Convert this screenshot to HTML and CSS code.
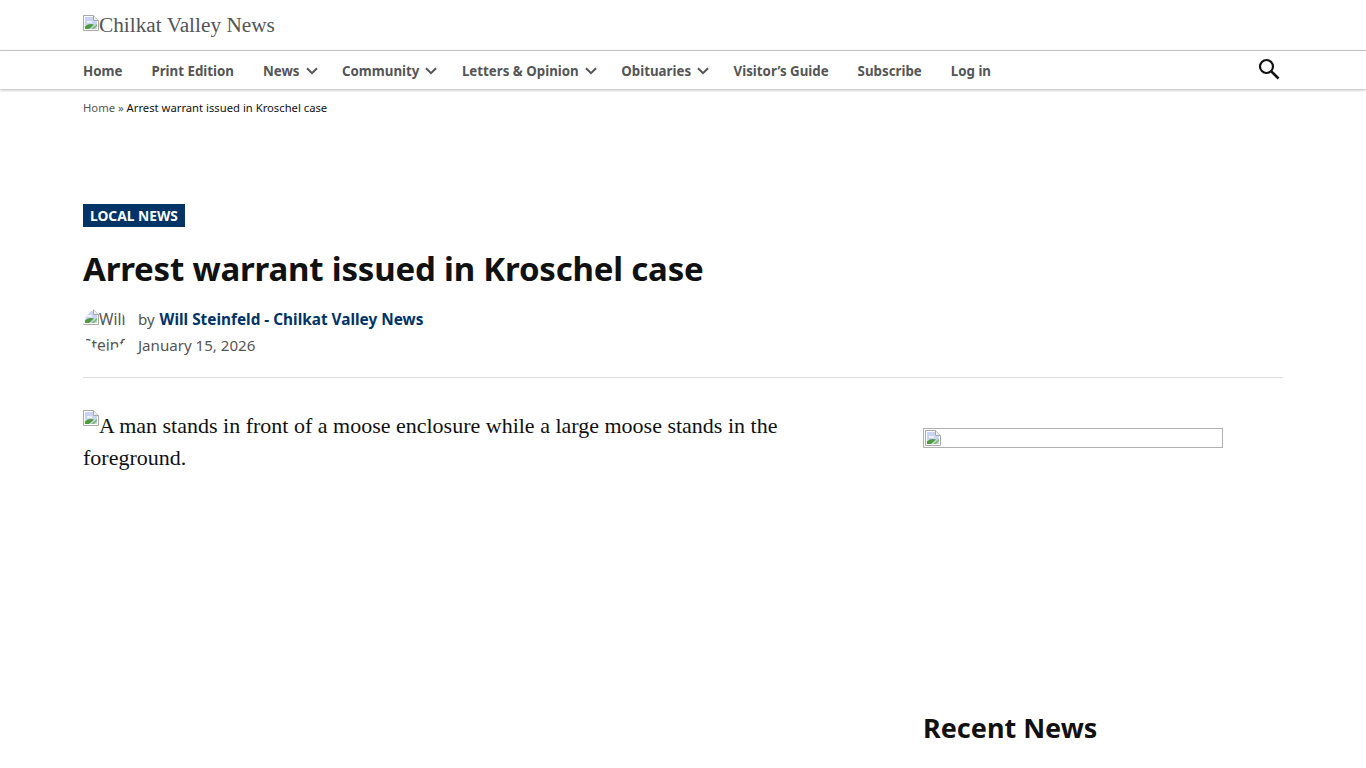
FILE: index.html
```html
<!DOCTYPE html>
<html lang="en">
<head>
<meta charset="utf-8">
<title>Arrest warrant issued in Kroschel case</title>
<link rel="stylesheet" href="styles.css">
</head>
<body>
<svg class="defs" width="0" height="0" aria-hidden="true">
  <symbol id="broken" viewBox="0 0 16 16">
    <path d="M0.5 0.5H10.5L15.5 5.5V15.5H0.5Z" fill="#fff" stroke="#a9a9a9"/>
    <path d="M2 2H10V6H14V14H2Z" fill="#c9d4f4"/>
    <path d="M4 6H9V8H4Z" fill="#eef1fb"/>
    <path d="M2 14V11.5C5 8.5 8 8.5 11 9.5L6 14Z" fill="#4f9a3c"/>
    <path d="M8 14L14 9V11L11 14Z" fill="#7cbb63"/>
    <path d="M10.5 0.5V5.5H15.5" fill="#eee" stroke="#a9a9a9"/>
  </symbol>
</svg>
<header class="brand-bar">
  <div class="wrap brand-alt"><svg class="broken"><use href="#broken"/></svg>Chilkat Valley News</div>
</header>
<nav class="nav-bar">
  <div class="wrap nav-inner">
    <ul class="menu">
      <li><a href="#">Home</a></li>
      <li><a href="#">Print Edition</a></li>
      <li class="has-sub"><a href="#">News</a><svg class="chev" viewBox="0 0 12 8"><path d="M1 1.2L6 6.2L11 1.2" fill="none" stroke="currentColor" stroke-width="2"/></svg></li>
      <li class="has-sub"><a href="#">Community</a><svg class="chev" viewBox="0 0 12 8"><path d="M1 1.2L6 6.2L11 1.2" fill="none" stroke="currentColor" stroke-width="2"/></svg></li>
      <li class="has-sub"><a href="#">Letters &amp; Opinion</a><svg class="chev" viewBox="0 0 12 8"><path d="M1 1.2L6 6.2L11 1.2" fill="none" stroke="currentColor" stroke-width="2"/></svg></li>
      <li class="has-sub"><a href="#">Obituaries</a><svg class="chev" viewBox="0 0 12 8"><path d="M1 1.2L6 6.2L11 1.2" fill="none" stroke="currentColor" stroke-width="2"/></svg></li>
      <li><a href="#">Visitor’s Guide</a></li>
      <li><a href="#">Subscribe</a></li>
      <li><a href="#">Log in</a></li>
    </ul>
    <svg class="search" viewBox="0 0 24 24" aria-label="Search"><circle cx="9.5" cy="9.5" r="6.5" fill="none" stroke="#111" stroke-width="2.2"/><path d="M14.3 14.3L21.5 21.5" stroke="#111" stroke-width="2.6"/></svg>
  </div>
</nav>
<div class="wrap crumbs"><a href="#">Home</a> <span class="sep">»</span> Arrest warrant issued in Kroschel case</div>
<main class="wrap">
  <header class="entry-head">
    <a class="tag" href="#">LOCAL NEWS</a>
    <h1>Arrest warrant issued in Kroschel case</h1>
    <div class="byline">
      <div class="avatar"><svg class="broken"><use href="#broken"/></svg>Will Steinfeld</div>
      <div class="meta">
        <div class="author">by <a href="#">Will Steinfeld - Chilkat Valley News</a></div>
        <div class="date">January 15, 2026</div>
      </div>
    </div>
  </header>
  <div class="columns">
    <article class="story">
      <p class="photo-alt"><svg class="broken"><use href="#broken"/></svg>A man stands in front of a moose enclosure while a large moose stands in the foreground.</p>
    </article>
    <aside class="side">
      <div class="ad"><svg class="broken"><use href="#broken"/></svg></div>
      <h2>Recent News</h2>
    </aside>
  </div>
</main>
</body>
</html>
```
FILE: styles.css
```css
* { box-sizing: border-box; }
html, body { margin: 0; padding: 0; height: 768px; overflow: hidden; background: #fff; }
body { font-family: "Noto Sans", "Open Sans", sans-serif; color: #111; }
a { color: inherit; text-decoration: none; }
.defs { display: block; height: 0; }
.wrap { width: 1200px; margin-left: 83px; }
.broken { width: 16px; height: 16px; display: inline-block; }
.brand-bar { height: 51px; border-bottom: 1px solid #ccc; }
.brand-alt { padding-top: 15px; font: 21.3px/21px "Liberation Serif", serif; color: #555; display: flex; align-items: flex-start; }
.nav-bar { height: 38px; box-shadow: 0 1px 3px rgba(0,0,0,.3); }
.nav-inner { display: flex; justify-content: space-between; align-items: center; height: 38px; padding-top: 2px; }
.menu { display: flex; list-style: none; margin: 0; padding: 0; gap: 29px; font-size: 13.3px; font-weight: 700; color: #555; line-height: 36px; }
.menu li { display: flex; align-items: center; }
.has-sub { gap: 6px; margin-right: -4.5px; }
.chev { width: 12px; height: 8px; color: #555; }
.search { width: 24px; height: 24px; margin-right: 2px; margin-top: -4px; }
.crumbs { font-size: 11.25px; line-height: 17px; margin-top: 10px; color: #111; }
.crumbs a, .sep { color: #555; }
.entry-head { padding-top: 88px; border-bottom: 1px solid #ddd; height: 262px; }
.tag { display: inline-block; background: #003366; color: #fff; font-size: 13.8px; font-weight: 700; line-height: 23px; padding: 0 7px; }
h1 { font-size: 33px; letter-spacing: -.2px; line-height: 44px; font-weight: 700; margin: 20px 0 15px; color: #111; }
.byline { display: flex; gap: 10px; }
.avatar { width: 45px; height: 45px; overflow: hidden; border-radius: 50%; font-size: 15.5px; line-height: 26px; color: #555; }
.meta { font-size: 15.1px; line-height: 26px; color: #555; }
.author a { color: #003366; font-weight: 700; font-size: 15.35px; margin-left: 1px; }
.columns { display: flex; justify-content: space-between; padding-top: 32px; }
.story { width: 720px; }
.photo-alt { margin: 0; font: 22px/32px "Liberation Serif", serif; color: #111; }
.photo-alt .broken { vertical-align: 7px; }
.side { width: 360px; padding-top: 18px; }
.ad { width: 300px; height: 20px; border: 1px solid #b0b0b0; overflow: hidden; padding: 1px; }
.ad .broken { display: block; }
h2 { font-size: 27px; line-height: 36px; font-weight: 700; margin: 262px 0 0; color: #111; }
```
